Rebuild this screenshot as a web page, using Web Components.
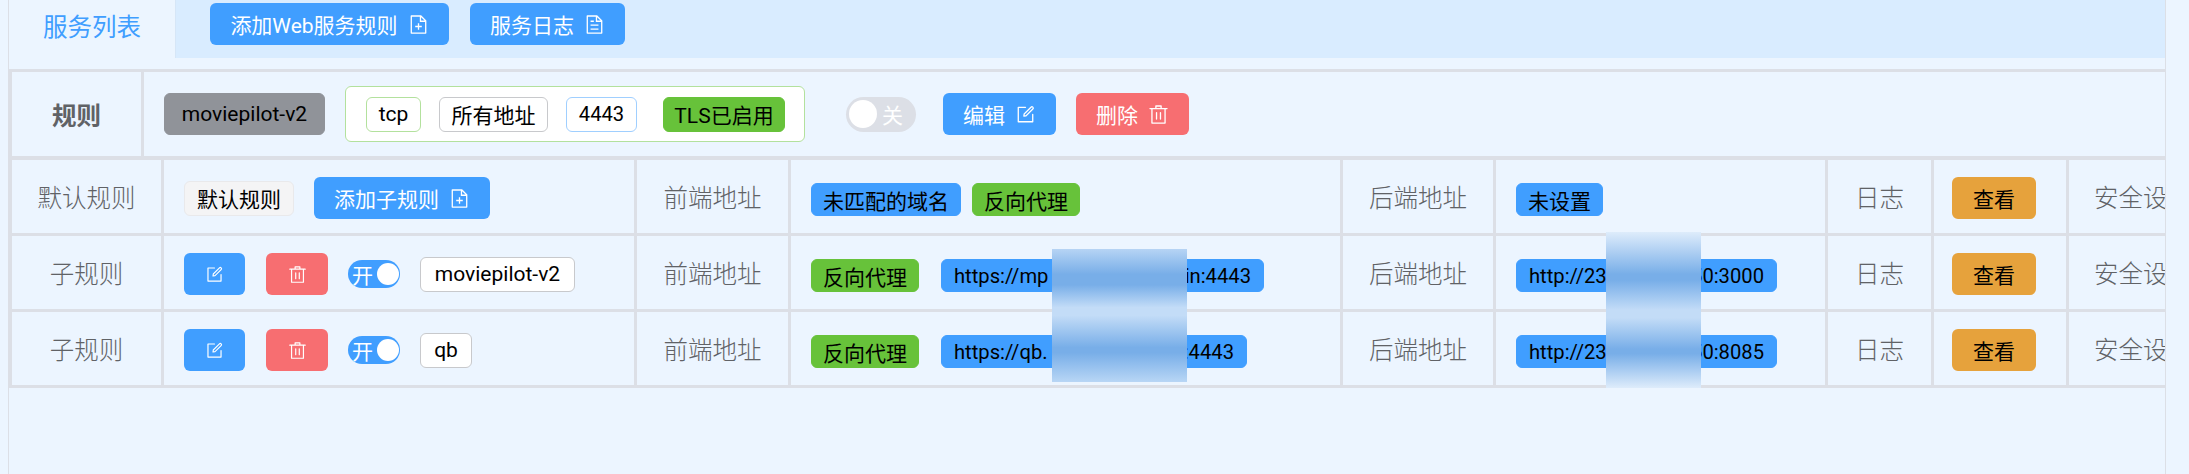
<!DOCTYPE html>
<html lang="zh-CN">
<head>
<meta charset="utf-8">
<title>服务列表</title>
<style>
  html, body { margin: 0; height: 100%; background: #ecf5ff; }
  body { font-family: Roboto, "Noto Sans CJK SC", "Noto Sans", sans-serif; overflow: hidden; }
  svc-blur.a { left: 1052px; top: 249px; width: 135px; height: 133px; }
  svc-blur.b { left: 1606px; top: 232px; width: 95px; height: 156px; }
</style>
</head>
<body>
<svc-app>
  <svc-tabs label="服务列表">
    <svc-button type="primary" icon="document-add">添加Web服务规则</svc-button>
    <svc-button type="primary" icon="document">服务日志</svc-button>
  </svc-tabs>

  <svc-rule-head>
    <svc-cell head>规则</svc-cell>
    <svc-cell start>
      <svc-tag kind="gray" h="42" w="161">moviepilot-v2</svc-tag>
      <svc-bind-box>
        <svc-tag kind="line-green" w="55">tcp</svc-tag>
        <svc-tag kind="line-gray" w="109">所有地址</svc-tag>
        <svc-tag kind="line-blue" w="71" small style="margin-right:8px">4443</svc-tag>
        <svc-tag kind="green" w="122">TLS已启用</svc-tag>
      </svc-bind-box>
      <svc-switch label="关" style="margin:0 7px 0 21px"></svc-switch>
      <svc-button type="primary" icon="edit">编辑</svc-button>
      <svc-button type="danger" icon="delete">删除</svc-button>
    </svc-cell>
  </svc-rule-head>

  <svc-table>
    <svc-row>
      <svc-cell>默认规则</svc-cell>
      <svc-cell start>
        <svc-tag kind="light" w="110">默认规则</svc-tag>
        <svc-button type="primary" icon="document-add">添加子规则</svc-button>
      </svc-cell>
      <svc-cell>前端地址</svc-cell>
      <svc-cell start tight>
        <svc-tag kind="blue" h="33" w="150" low>未匹配的域名</svc-tag>
        <svc-tag kind="green" h="33" w="108" low>反向代理</svc-tag>
      </svc-cell>
      <svc-cell>后端地址</svc-cell>
      <svc-cell start><svc-tag kind="blue" h="33" w="87" low>未设置</svc-tag></svc-cell>
      <svc-cell>日志</svc-cell>
      <svc-cell start><svc-button type="warning">查看</svc-button></svc-cell>
      <svc-cell clip>安全设置</svc-cell>
    </svc-row>

    <svc-row>
      <svc-cell>子规则</svc-cell>
      <svc-cell start>
        <svc-button type="primary" icon="edit" square></svc-button>
        <svc-button type="danger" icon="delete" square></svc-button>
        <svc-switch label="开" on></svc-switch>
        <svc-tag kind="line-gray" w="155">moviepilot-v2</svc-tag>
      </svc-cell>
      <svc-cell>前端地址</svc-cell>
      <svc-cell start>
        <svc-tag kind="green" h="33" w="108" low>反向代理</svc-tag>
        <svc-tag kind="blue" h="33" w="323" split small low style="margin-left:2px"><span>https://mp</span><span>in:4443</span></svc-tag>
      </svc-cell>
      <svc-cell>后端地址</svc-cell>
      <svc-cell start><svc-tag kind="blue" h="33" w="261" split small low><span>http://23</span><span>50:3000</span></svc-tag></svc-cell>
      <svc-cell>日志</svc-cell>
      <svc-cell start><svc-button type="warning">查看</svc-button></svc-cell>
      <svc-cell clip>安全设置</svc-cell>
    </svc-row>

    <svc-row>
      <svc-cell>子规则</svc-cell>
      <svc-cell start>
        <svc-button type="primary" icon="edit" square></svc-button>
        <svc-button type="danger" icon="delete" square></svc-button>
        <svc-switch label="开" on></svc-switch>
        <svc-tag kind="line-gray" w="52">qb</svc-tag>
      </svc-cell>
      <svc-cell>前端地址</svc-cell>
      <svc-cell start>
        <svc-tag kind="green" h="33" w="108" low>反向代理</svc-tag>
        <svc-tag kind="blue" h="33" w="306" split small low style="margin-left:2px"><span>https://qb.</span><span>:4443</span></svc-tag>
      </svc-cell>
      <svc-cell>后端地址</svc-cell>
      <svc-cell start><svc-tag kind="blue" h="33" w="261" split small low><span>http://23</span><span>50:8085</span></svc-tag></svc-cell>
      <svc-cell>日志</svc-cell>
      <svc-cell start><svc-button type="warning">查看</svc-button></svc-cell>
      <svc-cell clip>安全设置</svc-cell>
    </svc-row>
  </svc-table>

  <svc-blur class="a" slot="over" stops="#b6d4f4 0%,#78aee8 19%,#78aee8 27%,#c3dcf7 44%,#c3dcf7 50%,#78aee8 74%,#78aee8 78%,#b8d6f5 100%"></svc-blur>
  <svc-blur class="b" slot="over" stops="#deecfb 0%,#78aee8 27%,#78aee8 31%,#c3dcf7 50%,#c3dcf7 55%,#78aee8 75%,#78aee8 78%,#deecfb 100%"></svc-blur>
</svc-app>

<script>
const ICONS = {
  'edit': '<path d="M832 512a32 32 0 1 1 64 0v352a32 32 0 0 1-32 32H160a32 32 0 0 1-32-32V160a32 32 0 0 1 32-32h352a32 32 0 0 1 0 64H192v640h640z"/><path d="m469.952 554.24 52.8-7.552L847.104 222.4a32 32 0 1 0-45.248-45.248L477.44 501.44l-7.552 52.8zm422.4-422.4a96 96 0 0 1 0 135.808l-331.84 331.84a32 32 0 0 1-18.112 9.088L436.8 623.68a32 32 0 0 1-36.224-36.224l15.104-105.6a32 32 0 0 1 9.024-18.112l331.904-331.84a96 96 0 0 1 135.744 0z"/>',
  'delete': '<path d="M160 256H96a32 32 0 0 1 0-64h256V95.936a32 32 0 0 1 32-32h256a32 32 0 0 1 32 32V192h256a32 32 0 1 1 0 64h-64v672a32 32 0 0 1-32 32H192a32 32 0 0 1-32-32zm448-64v-64H416v64zM224 896h576V256H224zm192-128a32 32 0 0 1-32-32V416a32 32 0 0 1 64 0v320a32 32 0 0 1-32 32m192 0a32 32 0 0 1-32-32V416a32 32 0 0 1 64 0v320a32 32 0 0 1-32 32"/>',
  'document': '<path d="M832 384H576V128H192v768h640zm-26.496-64L640 154.496V320zM160 64h480l256 256v608a32 32 0 0 1-32 32H160a32 32 0 0 1-32-32V96a32 32 0 0 1 32-32m160 448h384v64H320zm0-192h160v64H320zm0 384h384v64H320z"/>',
  'document-add': '<path d="M832 384H576V128H192v768h640zm-26.496-64L640 154.496V320zM160 64h480l256 256v608a32 32 0 0 1-32 32H160a32 32 0 0 1-32-32V96a32 32 0 0 1 32-32m320 512V448h64v128h128v64H544v128h-64V640H352v-64z"/>'
};

// small helper, every element below just hands its markup to this
class Base extends HTMLElement {
  constructor(html) {
    super();
    this.attachShadow({ mode: 'open' });
    this.shadowRoot.innerHTML = html;
  }
}

class SvcApp extends Base {
  constructor() {
    super(`
      <style>
        :host { display: block; position: relative; box-sizing: border-box; height: 474px; padding: 0 23px 0 8px; background: #ecf5ff; overflow: hidden; }
        .panel { height: 100%; overflow: hidden; border: solid #dcdfe6; border-width: 0 1px; }
      </style>
      <div class="panel"><slot></slot></div>
      <slot name="over"></slot>`);
  }
}

class SvcTabs extends Base {
  constructor() {
    super(`
      <style>
        :host { display: flex; height: 58px; margin-bottom: 11px; }
        .tab { width: 167px; padding-bottom: 8px; box-sizing: border-box; border-right: 1px solid #d6e6f7; color: #409eff; font-size: 24.5px; display: flex; align-items: center; justify-content: center; }
        .bar { flex: 1; display: flex; align-items: flex-start; gap: 21px; padding: 3px 0 0 34px; background: #d9ecff; }
      </style>
      <div class="tab"></div>
      <div class="bar"><slot></slot></div>`);
    this.shadowRoot.querySelector('.tab').textContent = this.getAttribute('label');
  }
}

class SvcButton extends Base {
  constructor() {
    super(`
      <style>
        :host { display: inline-flex; align-items: center; justify-content: center; gap: 10px; box-sizing: border-box; height: 42px; padding: 0 20px; border-radius: 6px; font-size: 21px; color: #fff; flex: none; }
        :host([type=primary]) { background: #409eff; }
        :host([type=danger]) { background: #f76e71; }
        :host([type=warning]) { background: #e6a23c; color: #000; width: 84px; padding: 0; margin-left: -2px; }
        :host([square]) { padding: 0; width: 61px; gap: 0; }
        :host([square][type=danger]) { width: 62px; margin-left: 1px; }
        svg { width: 21px; height: 21px; fill: currentColor; display: block; }
        :host([square]) svg { width: 19px; height: 19px; }
      </style>
      <slot></slot><span id="i"></span>`);
    const name = this.getAttribute('icon');
    const i = this.shadowRoot.getElementById('i');
    if (name) i.innerHTML = `<svg viewBox="0 0 1024 1024">${ICONS[name]}</svg>`;
    else i.remove();
    // the long button in the tab bar runs a touch wider than its text gives
    if (this.textContent.includes('Web')) this.style.width = '239px';
  }
}

class SvcTag extends Base {
  constructor() {
    super(`
      <style>
        :host { display: inline-flex; align-items: center; justify-content: center; box-sizing: border-box; height: var(--h, 35px); padding: 0 12px; border: 1px solid transparent; border-radius: 6px; font-size: 21px; color: #000; white-space: nowrap; flex: none; }
        :host([low]) { margin-top: 3px; }
        :host([small]) { font-size: 20.2px; }
        :host([kind=gray]) { background: #909399; border-color: #909399; }
        :host([kind=green]) { background: #67c23a; border-color: #67c23a; }
        :host([kind=blue]) { background: #409eff; border-color: #409eff; }
        :host([kind=light]) { background: #f4f4f5; border-color: #e9e9eb; }
        :host([kind=line-green]) { background: #fff; border-color: #b3e19d; }
        :host([kind=line-gray]) { background: #fff; border-color: #c8c9cc; }
        :host([kind=line-blue]) { background: #fff; border-color: #a0cfff; }
        :host([split]) { justify-content: space-between; }
      </style>
      <slot></slot>`);
    if (this.hasAttribute('h')) this.style.setProperty('--h', this.getAttribute('h') + 'px');
    if (this.hasAttribute('w')) this.style.width = this.getAttribute('w') + 'px';
  }
}

class SvcBindBox extends Base {
  constructor() {
    super(`
      <style>
        :host { display: flex; align-items: center; gap: 18px; box-sizing: border-box; width: 460px; height: 56px; padding: 0 20px; background: #fff; border: 1px solid #b3e19d; border-radius: 6px; }
      </style>
      <slot></slot>`);
  }
}

class SvcSwitch extends Base {
  constructor() {
    super(`
      <style>
        :host { display: inline-flex; align-items: center; box-sizing: border-box; width: 70px; height: 35px; padding: 0 3px; border-radius: 18px; background: #dcdfe6; color: #fff; font-size: 21px; flex: none; gap: 5px; }
        .knob { width: 28px; height: 28px; border-radius: 50%; background: #fff; flex: none; }
        :host([on]) { width: 52px; height: 28px; background: #409eff; justify-content: space-between; padding: 0 1px 0 4px; gap: 0; }
        :host([on]) .knob { order: 2; width: 22px; height: 22px; }
      </style>
      <span class="knob"></span><span id="t"></span>`);
    this.shadowRoot.getElementById('t').textContent = this.getAttribute('label');
  }
}

class SvcCell extends Base {
  constructor() {
    super(`
      <style>
        :host { display: flex; align-items: center; justify-content: center; background: #ecf5ff; color: #606266; font-size: 24.5px; font-weight: 300; min-width: 0; overflow: hidden; white-space: nowrap; }
        :host([head]) { font-weight: 700; }
        :host([start]) { justify-content: flex-start; gap: 20px; padding-left: 20px; }
        :host([tight]) { gap: 11px; }
        ::slotted(*) { font-weight: 400; }
      </style>
      <slot></slot>`);
  }
}

class SvcRuleHead extends Base {
  constructor() {
    super(`
      <style>
        :host { display: grid; grid-template-columns: 129px 2100px; column-gap: 3px; height: 84px; padding: 3px 0 4px 3px; background: #dcdfe6; }
      </style>
      <slot></slot>`);
  }
}

class SvcTable extends Base {
  constructor() {
    super(`
      <style>
        :host { display: flex; flex-direction: column; gap: 3px; padding: 0 0 3px 3px; background: #dcdfe6; }
      </style>
      <slot></slot>`);
  }
}

class SvcRow extends Base {
  constructor() {
    super(`
      <style>
        :host { display: grid; grid-template-columns: 149px 470px 151px 549px 150px 329px 103px 132px 148px; column-gap: 3px; height: 73px; }
        ::slotted([start]) { padding-top: 3px; }
      </style>
      <slot></slot>`);
  }
}

class SvcBlur extends Base {
  constructor() {
    super(`<style>:host { position: absolute; display: block; }</style>`);
    this.style.background = `linear-gradient(180deg, ${this.getAttribute('stops')})`;
  }
}

customElements.define('svc-app', SvcApp);
customElements.define('svc-tabs', SvcTabs);
customElements.define('svc-button', SvcButton);
customElements.define('svc-tag', SvcTag);
customElements.define('svc-bind-box', SvcBindBox);
customElements.define('svc-switch', SvcSwitch);
customElements.define('svc-cell', SvcCell);
customElements.define('svc-rule-head', SvcRuleHead);
customElements.define('svc-table', SvcTable);
customElements.define('svc-row', SvcRow);
customElements.define('svc-blur', SvcBlur);
</script>
</body>
</html>
